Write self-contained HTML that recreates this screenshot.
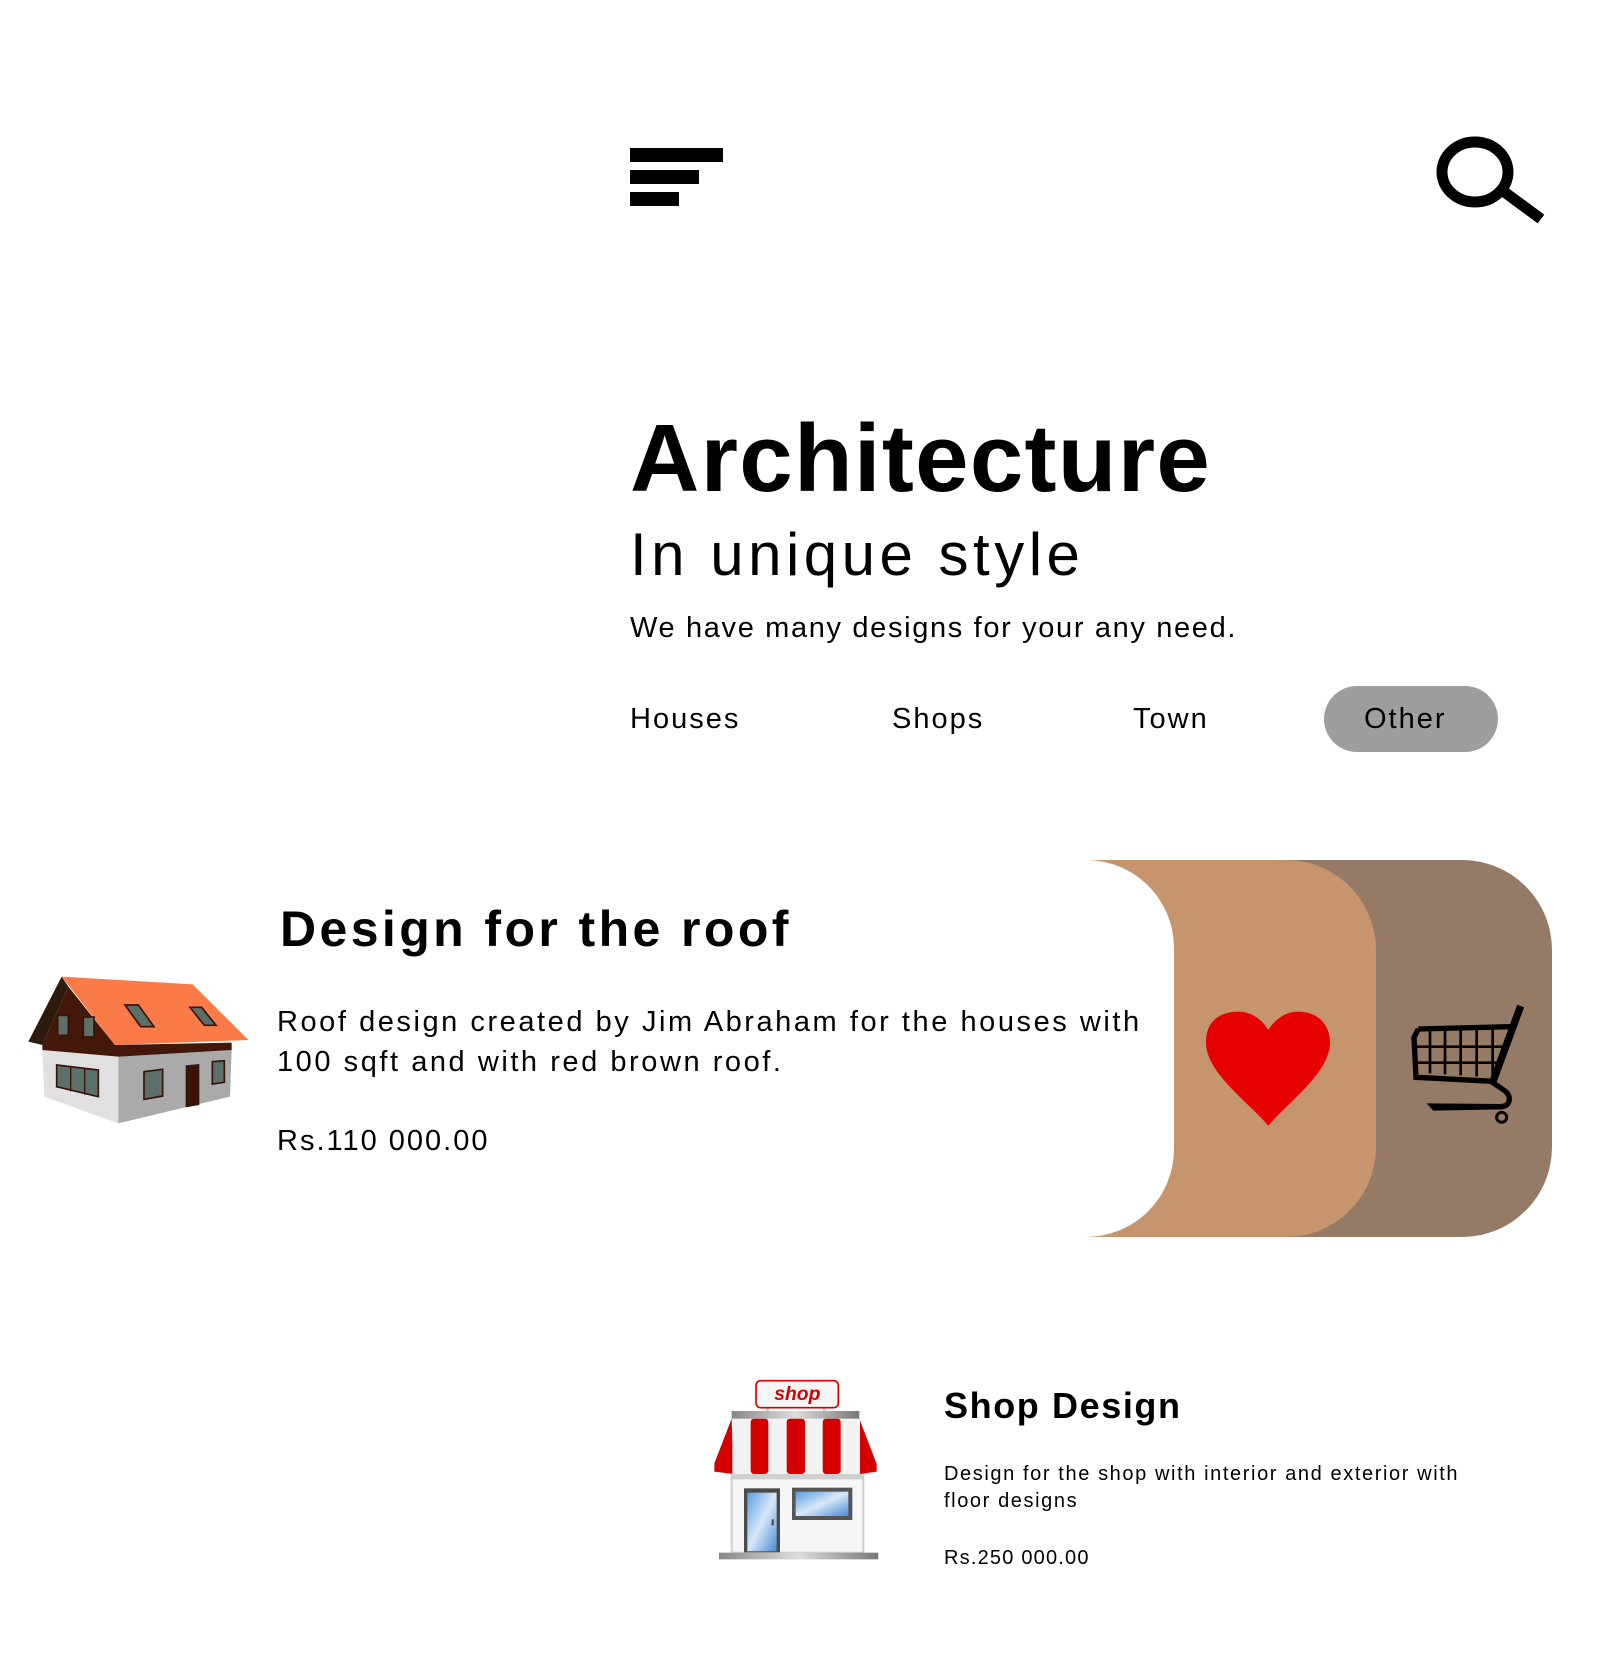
<!DOCTYPE html>
<html><head><meta charset="utf-8"><style>
html,body{margin:0;padding:0;background:#fff;}
body{width:1602px;height:1654px;position:relative;overflow:hidden;font-family:"Liberation Sans",sans-serif;color:#000;}
.t{position:absolute;line-height:1;white-space:nowrap;margin:0;}
.bar{position:absolute;background:#000;left:630px;}
</style></head><body>
<div class="bar" style="top:148px;width:93px;height:14px"></div>
<div class="bar" style="top:170px;width:69px;height:14px"></div>
<div class="bar" style="top:192px;width:49px;height:14px"></div>
<svg style="position:absolute;left:1420px;top:125px" width="140" height="110" viewBox="0 0 140 110">
<ellipse cx="55" cy="47" rx="33" ry="30" fill="none" stroke="#000" stroke-width="11"/>
<line x1="83" y1="66" x2="121" y2="94" stroke="#000" stroke-width="11"/>
</svg>

<div class="t" style="left:630px;top:411px;font-size:96px;font-weight:bold;letter-spacing:1.3px">Architecture</div>
<div class="t" style="left:630px;top:525px;font-size:60px;letter-spacing:4.5px">In unique style</div>
<div class="t" style="left:630px;top:614px;font-size:29px;letter-spacing:1.65px">We have many designs for your any need.</div>

<div style="position:absolute;left:1324px;top:686px;width:174px;height:66px;border-radius:33px;background:#9e9e9e"></div>
<div class="t" style="left:630px;top:705px;font-size:29px;letter-spacing:2px">Houses</div>
<div class="t" style="left:892px;top:705px;font-size:29px;letter-spacing:2px">Shops</div>
<div class="t" style="left:1133px;top:705px;font-size:29px;letter-spacing:2px">Town</div>
<div class="t" style="left:1364px;top:705px;font-size:29px;letter-spacing:2px">Other</div>

<!-- card -->
<div style="position:absolute;left:1200px;top:860px;width:352px;height:377px;background:#957a66;border-radius:0 90px 90px 0"></div>
<div style="position:absolute;left:1080px;top:860px;width:296px;height:377px;background:#c6956e;border-radius:0 90px 90px 0"></div>
<div style="position:absolute;left:0;top:860px;width:1174px;height:377px;background:#fff;border-radius:0 88px 88px 0"></div>
<svg style="position:absolute;left:1150px;top:840px" width="450" height="400" viewBox="0 0 1350 1200">
<path d="M355,857 C300,790 170,700 168,610 C166,540 215,515 265,515 C310,515 340,545 355,570 C370,545 400,515 445,515 C495,515 540,545 540,610 C538,700 410,790 355,857Z" fill="#e60000"/>
<g stroke="#000" fill="none">
<line x1="1112" y1="498" x2="1030" y2="722" stroke-width="22"/>
<path d="M805,567 L1080,560 M805,567 L792,592 L798,712 L1028,724" stroke-width="16"/>
<path d="M840,570 V700 M885,570 V703 M932,568 V706 M980,566 V709 M1028,565 V712 M795,620 H1060 M795,668 H1045" stroke-width="8"/>
<path d="M1025,725 C1050,745 1080,755 1078,778 C1076,795 1065,800 1050,800" stroke-width="16"/>
</g>
<path d="M830,790 L1060,792 L1060,808 L850,812 Z" fill="#000"/>
<circle cx="1055" cy="832" r="15" fill="none" stroke="#000" stroke-width="9"/>
</svg>

<!-- house -->
<svg style="position:absolute;left:0;top:950px" width="260" height="180" viewBox="0 0 780 540">
<polygon points="185,80 85,275 127,285 205,110" fill="#2e1a0c"/>
<polygon points="205,110 127,285 127,302 355,322 695,302 695,278 345,285" fill="#43170a"/>
<polygon points="127,300 355,320 355,520 133,440" fill="#e0e0e0"/>
<polygon points="355,320 695,300 690,440 355,520" fill="#aaaaaa"/>
<polygon points="185,80 578,103 745,270 345,285" fill="#fb7b48"/>
<g fill="#5a7068" stroke="#3a1208" stroke-width="5">
<rect x="173" y="196" width="32" height="60"/><rect x="250" y="201" width="32" height="60"/>
<polygon points="375,165 415,165 462,230 422,230"/><polygon points="570,172 605,172 648,226 613,226"/>
<polygon points="170,345 295,360 295,440 170,410"/>
<polygon points="432,365 488,358 488,438 432,448"/>
<polygon points="637,335 673,332 673,397 637,402"/>
</g>
<line x1="212" y1="350" x2="212" y2="424" stroke="#3a1208" stroke-width="4"/><line x1="254" y1="355" x2="254" y2="434" stroke="#3a1208" stroke-width="4"/>
<polygon points="557,346 598,342 598,465 557,472" fill="#3a1208"/>
</svg>

<div class="t" style="left:280px;top:904px;font-size:50px;font-weight:bold;letter-spacing:3.4px">Design for the roof</div>
<div class="t" style="left:277px;top:1002px;font-size:29px;letter-spacing:2.55px;line-height:40px">Roof design created by Jim Abraham for the houses with<br>100 sqft and with red brown roof.</div>
<div class="t" style="left:277px;top:1127px;font-size:29px;letter-spacing:2px">Rs.110 000.00</div>

<!-- shop -->
<svg style="position:absolute;left:680px;top:1340px" width="240" height="240" viewBox="0 0 720 720">
<defs><linearGradient id="g1" x1="0" x2="1"><stop offset="0" stop-color="#888"/><stop offset=".5" stop-color="#ddd"/><stop offset="1" stop-color="#777"/></linearGradient>
<linearGradient id="b1" x1="0" y1="0" x2="1" y2="1"><stop offset="0" stop-color="#5a9de0"/><stop offset=".5" stop-color="#d8e8f8"/><stop offset="1" stop-color="#4a8ad8"/></linearGradient></defs>
<rect x="258" y="200" width="10" height="16" fill="#ccc"/><rect x="428" y="200" width="10" height="16" fill="#ccc"/>
<rect x="228" y="122" width="247" height="81" rx="14" fill="#f6f6f6" stroke="#d40000" stroke-width="5"/>
<text x="352" y="180" text-anchor="middle" font-family="Liberation Sans,sans-serif" font-style="italic" font-weight="bold" font-size="58" fill="#d40000">shop</text>
<rect x="155" y="400" width="395" height="238" fill="#f6f6f6" stroke="#cfcfcf" stroke-width="6"/>
<rect x="155" y="400" width="395" height="18" fill="#cfcfcf"/>
<polygon points="155,236 103,370 103,395 160,402" fill="#d40000"/>
<polygon points="538,236 590,372 590,395 540,402" fill="#d40000"/>
<rect x="157" y="236" width="383" height="166" fill="#f2f2f2"/>
<rect x="212" y="236" width="53" height="166" rx="10" fill="#d40000"/>
<rect x="320" y="236" width="55" height="166" rx="10" fill="#d40000"/>
<rect x="428" y="236" width="54" height="166" rx="10" fill="#d40000"/>
<rect x="155" y="213" width="383" height="23" fill="url(#g1)"/>
<rect x="192" y="445" width="108" height="192" fill="#4a4a4a"/>
<rect x="202" y="458" width="88" height="176" fill="url(#b1)"/>
<rect x="275" y="538" width="6" height="18" fill="#444"/>
<rect x="336" y="443" width="181" height="97" fill="#555"/>
<rect x="347" y="455" width="158" height="73" fill="url(#b1)"/>
<rect x="117" y="638" width="478" height="20" fill="url(#g1)"/>
</svg>

<div class="t" style="left:944px;top:1388px;font-size:36px;font-weight:bold;letter-spacing:1.6px">Shop Design</div>
<div class="t" style="left:944px;top:1461px;font-size:20px;letter-spacing:1.6px;line-height:27px">Design for the shop with interior and exterior with<br>floor designs</div>
<div class="t" style="left:944px;top:1548px;font-size:20px;letter-spacing:1.2px">Rs.250 000.00</div>
</body></html>
